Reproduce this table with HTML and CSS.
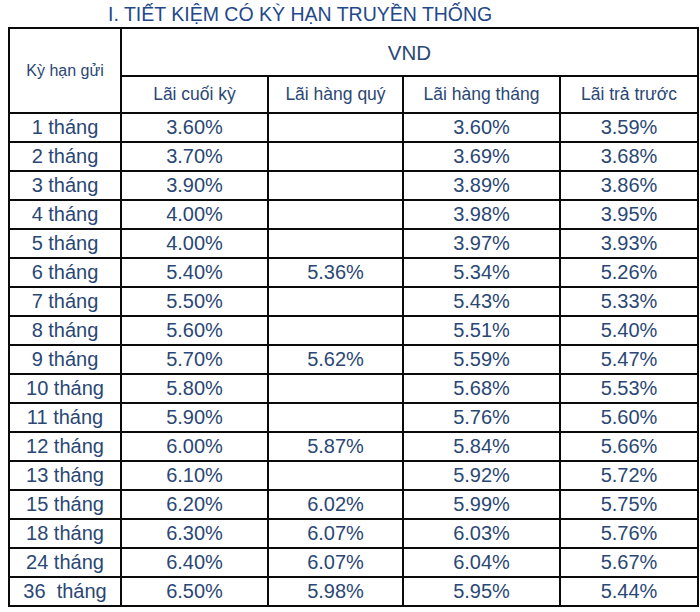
FILE: index.html
```html
<!DOCTYPE html>
<html lang="vi">
<head>
<meta charset="utf-8">
<title>Tiết kiệm có kỳ hạn truyền thống</title>
<link rel="stylesheet" href="styles.css">
</head>
<body>
<h1 class="title">I. TIẾT KIỆM CÓ KỲ HẠN TRUYỀN THỐNG</h1>
<div class="rate-table">
  <div class="cell head-term">Kỳ hạn gửi</div>
  <div class="cell head-cur">VND</div>
  <div class="cell head-sub">Lãi cuối kỳ</div>
  <div class="cell head-sub">Lãi hàng quý</div>
  <div class="cell head-sub">Lãi hàng tháng</div>
  <div class="cell head-sub">Lãi trả trước</div>

  <div class="cell">1 tháng</div><div class="cell">3.60%</div><div class="cell"></div><div class="cell">3.60%</div><div class="cell">3.59%</div>
  <div class="cell">2 tháng</div><div class="cell">3.70%</div><div class="cell"></div><div class="cell">3.69%</div><div class="cell">3.68%</div>
  <div class="cell">3 tháng</div><div class="cell">3.90%</div><div class="cell"></div><div class="cell">3.89%</div><div class="cell">3.86%</div>
  <div class="cell">4 tháng</div><div class="cell">4.00%</div><div class="cell"></div><div class="cell">3.98%</div><div class="cell">3.95%</div>
  <div class="cell">5 tháng</div><div class="cell">4.00%</div><div class="cell"></div><div class="cell">3.97%</div><div class="cell">3.93%</div>
  <div class="cell">6 tháng</div><div class="cell">5.40%</div><div class="cell">5.36%</div><div class="cell">5.34%</div><div class="cell">5.26%</div>
  <div class="cell">7 tháng</div><div class="cell">5.50%</div><div class="cell"></div><div class="cell">5.43%</div><div class="cell">5.33%</div>
  <div class="cell">8 tháng</div><div class="cell">5.60%</div><div class="cell"></div><div class="cell">5.51%</div><div class="cell">5.40%</div>
  <div class="cell">9 tháng</div><div class="cell">5.70%</div><div class="cell">5.62%</div><div class="cell">5.59%</div><div class="cell">5.47%</div>
  <div class="cell">10 tháng</div><div class="cell">5.80%</div><div class="cell"></div><div class="cell">5.68%</div><div class="cell">5.53%</div>
  <div class="cell">11 tháng</div><div class="cell">5.90%</div><div class="cell"></div><div class="cell">5.76%</div><div class="cell">5.60%</div>
  <div class="cell">12 tháng</div><div class="cell">6.00%</div><div class="cell">5.87%</div><div class="cell">5.84%</div><div class="cell">5.66%</div>
  <div class="cell">13 tháng</div><div class="cell">6.10%</div><div class="cell"></div><div class="cell">5.92%</div><div class="cell">5.72%</div>
  <div class="cell">15 tháng</div><div class="cell">6.20%</div><div class="cell">6.02%</div><div class="cell">5.99%</div><div class="cell">5.75%</div>
  <div class="cell">18 tháng</div><div class="cell">6.30%</div><div class="cell">6.07%</div><div class="cell">6.03%</div><div class="cell">5.76%</div>
  <div class="cell">24 tháng</div><div class="cell">6.40%</div><div class="cell">6.07%</div><div class="cell">6.04%</div><div class="cell">5.67%</div>
  <div class="cell">36&nbsp; tháng</div><div class="cell">6.50%</div><div class="cell">5.98%</div><div class="cell">5.95%</div><div class="cell">5.44%</div>
</div>
</body>
</html>
```

FILE: styles.css
```css
html, body {
  margin: 0;
  padding: 0;
  background: #ffffff;
}

body {
  font-family: "Liberation Sans", Arial, sans-serif;
  color: #2a4775;
}

.title {
  margin: 0;
  padding-left: 108px;
  height: 27px;
  font-size: 19.5px;
  line-height: 28px;
  font-weight: normal;
  color: #23488a;
  white-space: nowrap;
}

.rate-table {
  margin-left: 8px;
  width: 691px;
  box-sizing: border-box;
  display: grid;
  grid-template-columns: 110px 145px 133px 155px 136px;
  grid-template-rows: 46px 35px repeat(17, 27px);
  gap: 2px;
  padding: 2px;
  background: #0a0a0a;
}

.cell {
  background: #ffffff;
  display: flex;
  align-items: center;
  justify-content: center;
  font-size: 20px;
  line-height: 23px;
  white-space: nowrap;
}

.head-term {
  grid-row: span 2;
  font-size: 16px;
}

.head-cur {
  grid-column: span 4;
  font-size: 20.5px;
}

.head-sub {
  font-size: 17.5px;
}
```
